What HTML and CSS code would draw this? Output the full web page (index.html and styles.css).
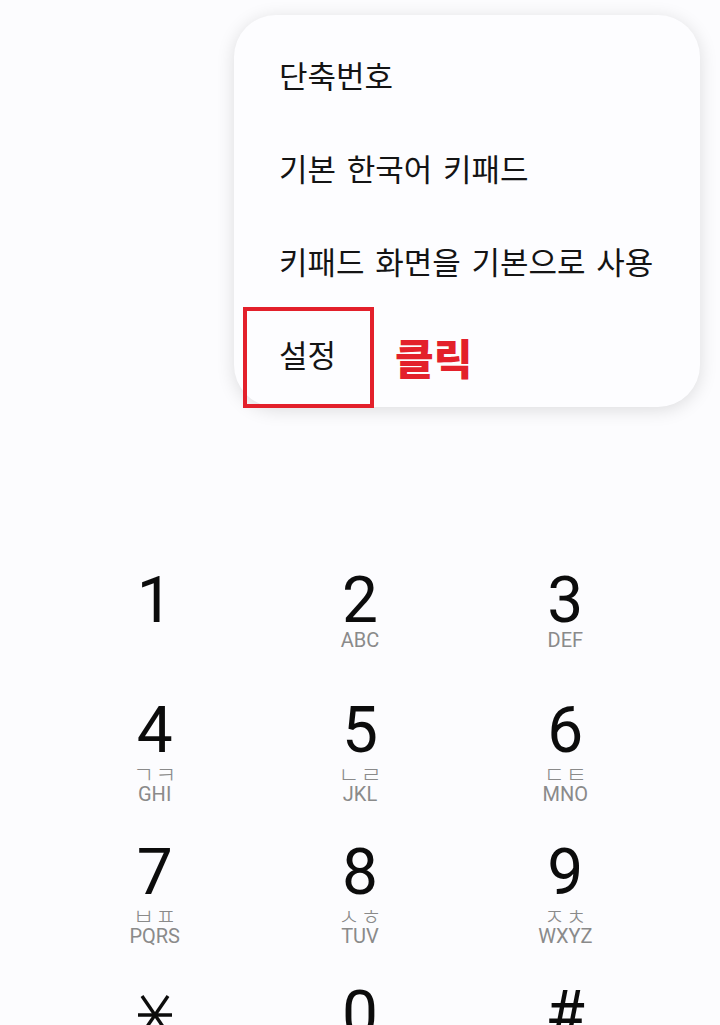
FILE: index.html
```html
<!DOCTYPE html>
<html lang="ko">
<head>
<meta charset="utf-8">
<link rel="stylesheet" href="styles.css">
</head>
<body>
<div class="screen">
  <div class="menu">
    <div class="menu-item">단축번호</div>
    <div class="menu-item">기본 한국어 키패드</div>
    <div class="menu-item">키패드 화면을 기본으로 사용</div>
    <div class="menu-item">설정</div>
  </div>
  <div class="highlight"></div>
  <div class="note">클릭</div>

  <div class="keypad">
    <div class="key r1"><span class="digit">1</span><span class="letters blank">&nbsp;</span></div>
    <div class="key r1"><span class="digit">2</span><span class="letters">ABC</span></div>
    <div class="key r1"><span class="digit">3</span><span class="letters">DEF</span></div>

    <div class="key"><span class="digit">4</span><span class="jamo">ㄱㅋ</span><span class="letters">GHI</span></div>
    <div class="key"><span class="digit">5</span><span class="jamo">ㄴㄹ</span><span class="letters">JKL</span></div>
    <div class="key"><span class="digit">6</span><span class="jamo">ㄷㅌ</span><span class="letters">MNO</span></div>

    <div class="key"><span class="digit">7</span><span class="jamo">ㅂㅍ</span><span class="letters">PQRS</span></div>
    <div class="key"><span class="digit">8</span><span class="jamo">ㅅㅎ</span><span class="letters">TUV</span></div>
    <div class="key"><span class="digit">9</span><span class="jamo">ㅈㅊ</span><span class="letters">WXYZ</span></div>

    <div class="key">
      <span class="digit star" aria-label="*">
        <svg width="40" height="56" viewBox="0 0 40 56">
          <g stroke="#0c0c0c" stroke-width="3.4" stroke-linecap="butt" fill="none">
            <line x1="3" y1="28" x2="37" y2="28"/>
            <line x1="7" y1="9" x2="33" y2="47"/>
            <line x1="33" y1="9" x2="7" y2="47"/>
          </g>
        </svg>
      </span>
      <span class="jamo blank">&nbsp;</span><span class="letters blank">&nbsp;</span>
    </div>
    <div class="key"><span class="digit">0</span><span class="jamo blank">&nbsp;</span><span class="letters">+</span></div>
    <div class="key"><span class="digit">#</span><span class="jamo blank">&nbsp;</span><span class="letters blank">&nbsp;</span></div>
  </div>
</div>
</body>
</html>
```
FILE: styles.css
```css
html, body {
  margin: 0;
  padding: 0;
}
body {
  background: #fcfcfe;
  font-family: "Noto Sans CJK KR", "Noto Sans", sans-serif;
  color: #111;
  overflow: hidden;
}
.screen {
  position: relative;
  width: 720px;
  height: 1025px;
  overflow: hidden;
}
.menu {
  position: absolute;
  left: 234px;
  top: 15px;
  width: 466px;
  box-sizing: border-box;
  padding: 13px 0 7px 0;
  background: #fdfdff;
  border-radius: 42px;
  box-shadow: 0 3px 18px rgba(0, 0, 0, 0.13);
}
.menu-item {
  height: 93px;
  display: flex;
  align-items: center;
  padding-left: 45px;
  font-size: 31px;
  line-height: 1;
  word-spacing: 2px;
  color: #141414;
}
.highlight {
  position: absolute;
  left: 243px;
  top: 307px;
  width: 131px;
  height: 101px;
  box-sizing: border-box;
  border: 4px solid #e3202b;
}
.note {
  position: absolute;
  left: 395px;
  top: 332px;
  font-size: 42px;
  line-height: 1.2;
  font-weight: 900;
  color: #e3202b;
}
.keypad {
  padding: 541px 52px 0 52px;
  display: grid;
  grid-template-columns: repeat(3, 1fr);
  grid-auto-rows: 142px;
}
.key {
  display: flex;
  flex-direction: column;
  align-items: center;
  justify-content: center;
}
.digit {
  font-family: Roboto, "Noto Sans", sans-serif;
  font-size: 64px;
  line-height: 56px;
  height: 56px;
  color: #0c0c0c;
}
.digit.star {
  display: flex;
  align-items: center;
}
.jamo {
  font-size: 23px;
  line-height: 20px;
  height: 20px;
  font-weight: 300;
  color: #8a8a8a;
  letter-spacing: 1px;
  margin-top: 4px;
  margin-right: -1px;
}
.letters {
  font-family: Roboto, "Noto Sans", sans-serif;
  font-size: 20px;
  line-height: 22px;
  color: #8a8a8a;
  margin-top: 0;
}
.blank {
  visibility: hidden;
}
```
